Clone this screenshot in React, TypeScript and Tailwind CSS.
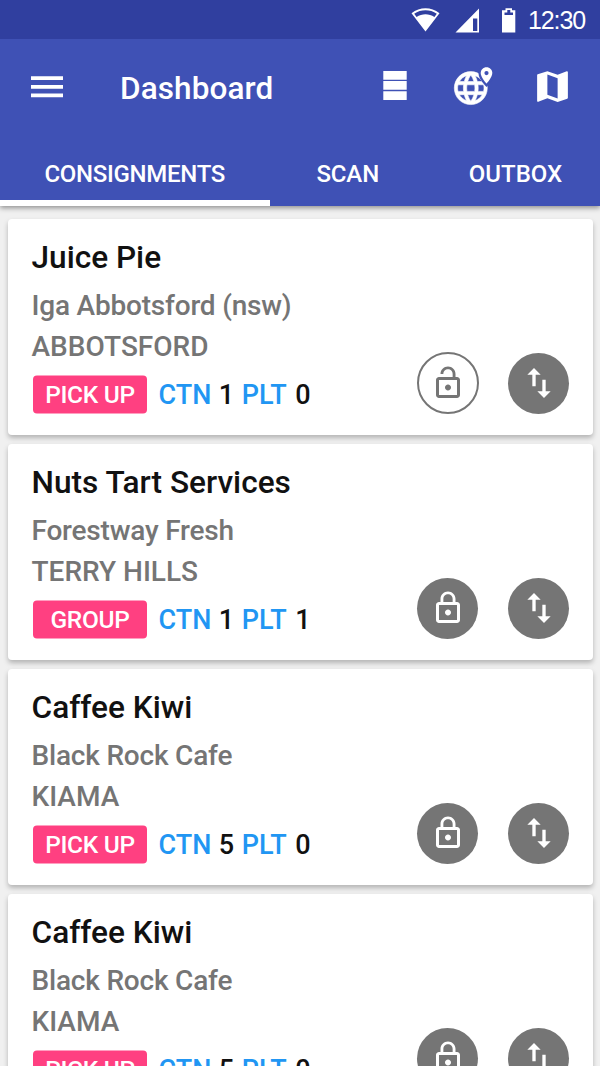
import React from "react";

type Consignment = {
  name: string;
  customer: string;
  suburb: string;
  kind: string;
  ctn: number;
  plt: number;
  open?: boolean;
};

const consignments: Consignment[] = [
  { name: "Juice Pie", customer: "Iga Abbotsford (nsw)", suburb: "ABBOTSFORD", kind: "PICK UP", ctn: 1, plt: 0, open: true },
  { name: "Nuts Tart Services", customer: "Forestway Fresh", suburb: "TERRY HILLS", kind: "GROUP", ctn: 1, plt: 1 },
  { name: "Caffee Kiwi", customer: "Black Rock Cafe", suburb: "KIAMA", kind: "PICK UP", ctn: 5, plt: 0 },
  { name: "Caffee Kiwi", customer: "Black Rock Cafe", suburb: "KIAMA", kind: "PICK UP", ctn: 5, plt: 0 },
];

const LOCK_OPEN =
  "M12 17c1.1 0 2-.9 2-2s-.9-2-2-2-2 .9-2 2 .9 2 2 2zm6-9h-1V6c0-2.76-2.24-5-5-5S7 3.24 7 6h1.9c0-1.71 1.39-3.1 3.1-3.1 1.71 0 3.1 1.39 3.1 3.1v2H6c-1.1 0-2 .9-2 2v10c0 1.1.9 2 2 2h12c1.1 0 2-.9 2-2V10c0-1.1-.9-2-2-2zm0 12H6V10h12v10z";
const LOCK_CLOSED =
  "M12 17c1.1 0 2-.9 2-2s-.9-2-2-2-2 .9-2 2 .9 2 2 2zm6-9h-1V6c0-2.76-2.24-5-5-5S7 3.24 7 6v2H6c-1.1 0-2 .9-2 2v10c0 1.1.9 2 2 2h12c1.1 0 2-.9 2-2V10c0-1.1-.9-2-2-2zM8.9 6c0-1.71 1.39-3.1 3.1-3.1s3.1 1.39 3.1 3.1v2H8.9V6zM18 20H6V10h12v10z";
const GLOBE =
  "M11.99 2C6.47 2 2 6.48 2 12s4.47 10 9.99 10C17.52 22 22 17.52 22 12S17.52 2 11.99 2zm6.93 6h-2.95c-.32-1.25-.78-2.45-1.38-3.56 1.84.63 3.37 1.91 4.33 3.56zM12 4.040c.83 1.200 1.480 2.530 1.910 3.960h-3.820c.43-1.430 1.080-2.760 1.910-3.960zM4.260 14C4.100 13.360 4 12.690 4 12s.1-1.360.26-2h3.380c-.08.66-.14 1.320-.14 2 0 .68.06 1.340.14 2H4.260zm.82 2h2.950c.32 1.250.78 2.450 1.380 3.560-1.840-.63-3.370-1.900-4.330-3.560zm2.950-8H5.080c.96-1.660 2.490-2.930 4.330-3.560C8.810 5.550 8.350 6.750 8.030 8zM12 19.960c-.83-1.200-1.480-2.530-1.910-3.960h3.820c-.43 1.430-1.080 2.760-1.910 3.960zM14.340 14H9.660c-.09-.66-.16-1.320-.16-2 0-.68.07-1.350.16-2h4.680c.09.65.16 1.320.16 2 0 .68-.07 1.340-.16 2zm.25 5.560c.6-1.110 1.060-2.310 1.380-3.560h2.950c-.96 1.650-2.490 2.930-4.330 3.560zM16.360 14c.08-.66.14-1.320.14-2 0-.68-.06-1.340-.14-2h3.380c.16.64.26 1.310.26 2s-.1 1.360-.26 2h-3.380z";
const PIN =
  "M486.500 67.300C483.200 67.300 480.700 69.900 480.700 73.100C480.700 77.400 486.500 83.700 486.500 83.700S492.300 77.400 492.300 73.100C492.300 69.900 489.800 67.300 486.500 67.300Z";

function StatusBar() {
  return (
    <div className="flex h-[39px] items-center bg-[#303f9f] pl-[411px] text-white">
      <svg width="108" height="39" viewBox="411 0 108 39" fill="currentColor">
        <path fillRule="evenodd" d="M411.500 13.300C420 6.500 431 6.500 439.500 13.300L425.500 31.500ZM414.200 13.700L416.600 16.900C422 13.400 429 13.400 434.400 16.900L436.800 13.700C430 9.200 421 9.200 414.200 13.700Z" />
        <path fillRule="evenodd" d="M479 8.500V32.500H455.500ZM477.300 18.500H473V31H477.300Z" />
        <path fillRule="evenodd" d="M505.500 8.300H512V10.300H515.300V32.500H502V10.300H505.500ZM507.300 10V12.500H504.500V15H513V12.500H510.300V10Z" />
      </svg>
      <span className="ml-[9px] mt-[2px] font-['Liberation_Sans',sans-serif] text-[25px] leading-[39px] tracking-[-1.100px]">12:30</span>
    </div>
  );
}

function AppBar() {
  return (
    <div className="flex h-[96px] items-center pl-[31px] pr-[27px]">
      <svg width="32" height="32" viewBox="0 0 32 32" fill="currentColor">
        <path d="M0 5.300H32V9H0ZM0 14H32V17.700H0ZM0 22.600H32V26.300H0Z" />
      </svg>
      <h1 className="ml-[57px] w-[263px] whitespace-nowrap pt-[3px] text-[31.500px] font-medium leading-[40px] tracking-[0.1px]">Dashboard</h1>
      <svg className="mb-[2px]" width="24" height="30" viewBox="0 0 24 30" fill="currentColor">
        <path d="M.3 0H23.700V8.700H.3ZM.3 10H23.700V18.800H.3ZM.3 20.200H23.700V29H.3Z" />
      </svg>
      <svg className="ml-[43px]" width="44" height="44" viewBox="450 65 44 44">
        <path transform="translate(451 68.300) scale(1.65)" fill="#fff" stroke="#fff" strokeWidth="0.350" d={GLOBE} />
        <path d={PIN} fill="#3f51b5" stroke="#3f51b5" strokeWidth="4.500" />
        <path d={PIN} fill="#fff" />
        <circle cx="486.500" cy="73.100" r="2.100" fill="#3f51b5" />
      </svg>
      <svg className="mb-px ml-[38px] shrink-0" width="41" height="41" viewBox="0 0 24 24" fill="currentColor">
        <path d="M20.5 3l-.16.03L15 5.1 9 3 3.36 4.9c-.21.07-.36.25-.36.48V20.5c0 .28.22.5.5.5l.16-.03L9 18.900l6 2.100 5.640-1.900c.21-.07.36-.25.36-.48V3.500c0-.28-.22-.5-.5-.5zM15 19l-6-2.110V5l6 2.110V19z" />
      </svg>
    </div>
  );
}

function Tabs() {
  return (
    <nav className="flex h-[71px] whitespace-nowrap text-[24px] font-medium leading-[78px]">
      <div className="h-full w-[269.500px] border-b-[6px] border-white text-center tracking-[-0.300px]">CONSIGNMENTS</div>
      <div className="w-[156.500px] text-center tracking-[-0.100px]">SCAN</div>
      <div className="flex-1 pl-[5px] text-center">OUTBOX</div>
    </nav>
  );
}

function Card({ item }: { item: Consignment }) {
  return (
    <article className="flex h-[216px] shrink-0 justify-between rounded-[4px] bg-white pl-[23.500px] pr-6 shadow-[0_3px_5px_rgba(0,0,0,0.25)]">
      <div className="whitespace-nowrap pt-[19px] font-medium">
        <h2 className="text-[31.600px] leading-[40px] text-[#111]">{item.name}</h2>
        <p className="mt-[8px] text-[28px] leading-[40px] tracking-[-0.200px] text-[#757575]">{item.customer}</p>
        <p className="mt-px text-[28px] leading-[40px] text-[#757575]">{item.suburb}</p>
        <div className="mt-2 flex items-center">
          <span className="ml-[1.500px] h-[38px] w-[114px] -translate-y-[0.500px] rounded-[4px] bg-[#ff4081] text-center text-[24.500px] leading-[38px] tracking-[-0.300px] text-white">{item.kind}</span>
          <span className="ml-[11.500px] flex text-[27px] leading-[40px] text-[#111]">
            <span className="text-[#2196f3]">CTN</span>
            <span className="ml-[7.500px]">{item.ctn}</span>
            <span className="ml-[7.500px] text-[#2196f3]">PLT</span>
            <span className="ml-[8.500px]">{item.plt}</span>
          </span>
        </div>
      </div>
      <div className="mb-[21px] flex h-[62px] items-center self-end">
        <button className={item.open ? "mr-[29px] flex size-[62px] items-center justify-center rounded-full border-2 border-[#757575] text-[#757575]" : "mr-[30px] flex size-[61px] items-center justify-center rounded-full bg-[#757575] text-white"}>
          <svg width="36" height="36" viewBox="0 0 24 24" fill="currentColor">
            <path d={item.open ? LOCK_OPEN : LOCK_CLOSED} />
          </svg>
        </button>
        <button className="flex size-[61px] items-center justify-center rounded-full bg-[#757575] text-white">
          <svg width="40" height="40" viewBox="0 0 24 24" fill="currentColor">
            <path d="M16 17.010V10h-2v7.010h-3L15 21l4-3.990h-3zM9 3L5 6.990h3V14h2V6.990h3L9 3z" />
          </svg>
        </button>
      </div>
    </article>
  );
}

export default function App() {
  return (
    <div className="flex h-[1066px] w-[600px] flex-col overflow-hidden bg-[#f0f0f0] font-['Roboto',sans-serif]">
      <header className="relative shrink-0 bg-[#3f51b5] text-white shadow-[0_2px_5px_rgba(0,0,0,0.4)]">
        <StatusBar />
        <AppBar />
        <Tabs />
      </header>
      <main className="flex flex-col gap-[9px] pl-2 pr-[7px] pt-[13px]">
        {consignments.map((item, i) => (
          <Card key={i} item={item} />
        ))}
      </main>
    </div>
  );
}
